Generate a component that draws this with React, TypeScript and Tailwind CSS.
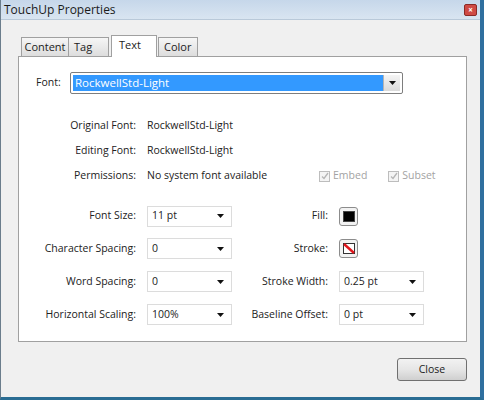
import React from "react";

function Arrow() {
  return (
    <svg width="7" height="4" viewBox="0 0 7 4">
      <path d="M0 0h7L3.5 4z" fill="#111" />
    </svg>
  );
}

function Select({ value, w }: { value: string; w: string }) {
  return (
    <div className={`${w} h-[21px] flex items-center justify-between bg-white border border-[#dcdcdc] pl-[4px] pr-[7px]`}>
      <span>{value}</span>
      <Arrow />
    </div>
  );
}

function Check({ label }: { label: string }) {
  return (
    <div className="flex items-center gap-[3px] text-[#a3a3a3]">
      <div className="w-[11px] h-[11px] border border-[#bdbdbd] bg-[#f4f4f4] flex items-center justify-center">
        <svg width="8" height="8" viewBox="0 0 8 8">
          <path d="M1 4.5l2 2L7 1" stroke="#b5b5b5" strokeWidth="1.3" fill="none" />
        </svg>
      </div>
      <span>{label}</span>
    </div>
  );
}

function Row({
  label,
  left,
  rlabel,
  right,
  h,
}: {
  label: string;
  left: React.ReactNode;
  rlabel: string;
  right: React.ReactNode;
  h: string;
}) {
  return (
    <div className={`flex items-center ${h}`}>
      <div className="w-[117px] text-right">{label}</div>
      <div className="ml-[11px]">{left}</div>
      <div className="w-[96px] text-right">{rlabel}</div>
      <div className="ml-[11px]">{right}</div>
    </div>
  );
}

export default function App() {
  return (
    <div
      className="w-[484px] h-[400px] flex flex-col bg-[#f0f0f0] border-l border-[#6b7d8c] border-r-[4px] border-r-[#2f6f9f] border-b-[3px] border-b-[#2a6d93] text-[10.5px] text-[#222] overflow-hidden"
      style={{ fontFamily: '"Open Sans", "Noto Sans", sans-serif' }}
    >
      {/* 标题栏 */}
      <div className="h-[20px] flex items-center justify-between pl-[3px] pr-[3px] bg-gradient-to-b from-[#c6d7ea] to-[#d9e5f1] border-b border-[#b9c9d9]">
        <span className="text-[12px] text-[#1b1b1b]">TouchUp Properties</span>
        <div className="w-[13px] h-[12px] rounded-[2px] bg-[#cf4a44] border border-[#8a2a27] flex items-center justify-center text-white text-[8px] leading-none font-bold">
          ×
        </div>
      </div>

      <div className="flex-1 flex flex-col pl-[17px] pt-[15px]">
        {/* 标签页 */}
        <div className="flex items-end h-[21px] pl-[3px] text-[11px]">
          <div className="h-[19px] w-[48px] justify-center flex items-center border border-[#a0a0a0] border-b-0 bg-gradient-to-b from-[#f6f6f6] to-[#dddddd]">Content</div>
          <div className="h-[19px] w-[40px] pl-[5px] flex items-center border border-[#a0a0a0] border-l-0 border-b-0 bg-gradient-to-b from-[#f6f6f6] to-[#dddddd]">Tag</div>
          <div className="h-[22px] w-[46px] -mb-px relative z-10 pl-[7px] pt-[1px] border border-[#a0a0a0] border-b-0 bg-white ml-[2px]">Text</div>
          <div className="h-[19px] w-[40px] ml-[1px] pl-[5px] flex items-center border border-[#a0a0a0] border-b-0 bg-gradient-to-b from-[#f6f6f6] to-[#dddddd]">Color</div>
        </div>

        {/* 面板 */}
        <div className="w-[449px] h-[286px] bg-white border border-[#a0a0a0]">
          <div className="flex items-center pl-[17px] pt-[15px]">
            <span className="w-[36px]">Font:</span>
            <div className="w-[333px] -ml-[2px] h-[22px] flex items-stretch border border-[#7e7e7e] rounded-[2px] p-[2px] bg-white">
              <div className="flex-1 bg-[#3399ff] text-white text-[11.5px] flex items-center pl-[2px]">RockwellStd-Light</div>
              <div className="w-[17px] flex items-center justify-center bg-gradient-to-b from-[#f4f4f4] to-[#dadada] border-l border-[#b4b4b4]">
                <Arrow />
              </div>
            </div>
          </div>

          <div className="mt-[19px] flex flex-col">
            <div className="flex items-center h-[25px]">
              <div className="w-[117px] text-right">Original Font:</div>
              <div className="ml-[11px]">RockwellStd-Light</div>
            </div>
            <div className="flex items-center h-[25px]">
              <div className="w-[117px] text-right">Editing Font:</div>
              <div className="ml-[11px]">RockwellStd-Light</div>
            </div>
            <div className="flex items-center h-[26px]">
              <div className="w-[117px] text-right">Permissions:</div>
              <div className="ml-[11px] w-[172px]">No system font available</div>
              <Check label="Embed" />
              <div className="ml-[21px]">
                <Check label="Subset" />
              </div>
            </div>
          </div>

          <div className="mt-[11px] flex flex-col">
            <Row
              h="h-[32px]"
              label="Font Size:"
              left={<Select value="11 pt" w="w-[85px]" />}
              rlabel="Fill:"
              right={
                <div className="w-[19px] h-[19px] rounded-[3px] border border-[#8c8c8c] bg-[#f2f2f2] flex items-center justify-center">
                  <div className="w-[12px] h-[11px] bg-black border border-[#444]" />
                </div>
              }
            />
            <Row
              h="h-[33px]"
              label="Character Spacing:"
              left={<Select value="0" w="w-[85px]" />}
              rlabel="Stroke:"
              right={
                <div className="w-[19px] h-[19px] rounded-[3px] border border-[#8c8c8c] bg-[#f2f2f2] flex items-center justify-center">
                  <svg width="12" height="11" viewBox="0 0 12 11">
                    <rect x="0.5" y="0.5" width="11" height="10" fill="#fff" stroke="#333" />
                    <path d="M1 1l10 9" stroke="#e0161c" strokeWidth="2.4" />
                  </svg>
                </div>
              }
            />
            <Row
              h="h-[33px]"
              label="Word Spacing:"
              left={<Select value="0" w="w-[85px]" />}
              rlabel="Stroke Width:"
              right={<Select value="0.25 pt" w="w-[85px]" />}
            />
            <Row
              h="h-[33px]"
              label="Horizontal Scaling:"
              left={<Select value="100%" w="w-[85px]" />}
              rlabel="Baseline Offset:"
              right={<Select value="0 pt" w="w-[85px]" />}
            />
          </div>
        </div>

        <div className="flex justify-end pr-[13px] mt-[16px]">
          <div className="w-[70px] h-[23px] rounded-[3px] border border-[#707070] bg-gradient-to-b from-[#f2f2f2] via-[#e6e6e6] to-[#cfcfcf] flex items-center justify-center">
            Close
          </div>
        </div>
      </div>
    </div>
  );
}
